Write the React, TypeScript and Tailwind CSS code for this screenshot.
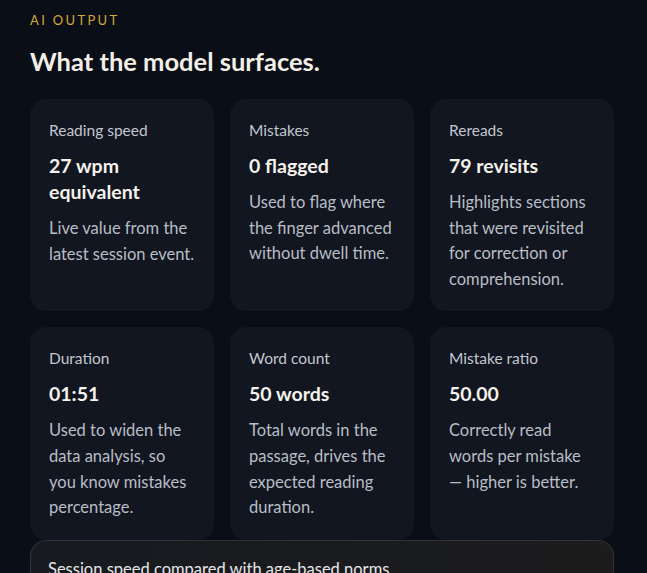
import React from "react";

const cards = [
  { label: "Reading speed", value: "27 wpm equivalent", desc: "Live value from the latest session event." },
  { label: "Mistakes", value: "0 flagged", desc: "Used to flag where the finger advanced without dwell time." },
  { label: "Rereads", value: "79 revisits", desc: "Highlights sections that were revisited for correction or comprehension." },
  { label: "Duration", value: "01:51", desc: "Used to widen the data analysis, so you know mistakes percentage." },
  { label: "Word count", value: "50 words", desc: "Total words in the passage, drives the expected reading duration." },
  { label: "Mistake ratio", value: "50.00", desc: "Correctly read words per mistake \u2014 higher is better." },
];

export default function App() {
  return (
    <div
      className="h-[573px] bg-[#0a0e17] pl-[30px] pt-[11px] overflow-hidden"
      style={{ fontFamily: "Lato, 'Noto Sans', sans-serif" }}
    >
      <div className="w-[584px]">
        <div className="text-[13px] leading-[18px] tracking-[0.18em] text-[#d6a83a]">AI OUTPUT</div>
        <h1 className="mt-[16px] text-[25.5px] leading-[32px] font-bold text-[#f3efe7]">What the model surfaces.</h1>
        <div className="mt-[22px] grid grid-cols-3 gap-x-4 gap-y-4">
          {cards.map((c) => (
            <div key={c.label} className="rounded-2xl bg-[#111620] px-[19px] pt-[20px] pb-[19px]">
              <div className="text-[15.5px] leading-[22px] text-[#c3c7cf]">{c.label}</div>
              <div className="mt-[12px] text-[19.5px] leading-[26px] font-bold text-[#f5f2ec]">{c.value}</div>
              <div className="mt-[11px] text-[16.5px] leading-[25.6px] text-[#b9bdc5]">{c.desc}</div>
            </div>
          ))}
        </div>
        <div className="mt-0 rounded-t-2xl border border-white/10 bg-gradient-to-r from-[#171a20] to-[#1c1c1d] px-[17px] pt-[17px] pb-4">
          <div className="text-[16.5px] leading-[22px] text-[#e6e6e6]">Session speed compared with age-based norms</div>
        </div>
      </div>
    </div>
  );
}
